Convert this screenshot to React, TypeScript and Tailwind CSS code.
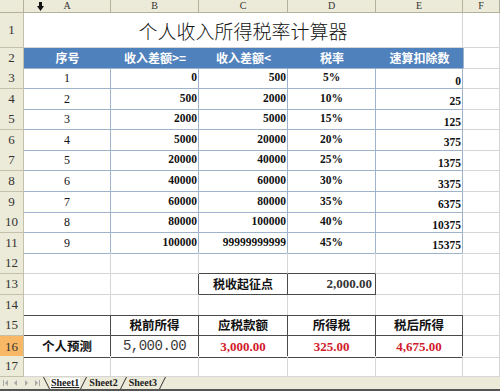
import React from "react";

const cols = "grid grid-cols-[24px_87px_88px_89px_88px_87px_37px]";
const grid = "border-r border-b border-[#d6d6d6]";
const tbl = "border-r border-b border-[#9fb4cc]";
const dark = "border-r border-b border-[#4a4a4a]";
const cjk = "font-['Noto_Sans_CJK_SC',sans-serif]";
const serif = "font-['Liberation_Serif','Noto_Sans_CJK_SC',serif]";

const rates = [
  [1, 0, 500, "5%", 0],
  [2, 500, 2000, "10%", 25],
  [3, 2000, 5000, "15%", 125],
  [4, 5000, 20000, "20%", 375],
  [5, 20000, 40000, "25%", 1375],
  [6, 40000, 60000, "30%", 3375],
  [7, 60000, 80000, "35%", 6375],
  [8, 80000, 100000, "40%", 10375],
  [9, 100000, 99999999999, "45%", 15375],
];

// heights of rows 3..17
const tall = [true, false, true, false, true, true, false, true, false, true, true, false, true, false, true];

function RowHead({ n, active }: { n: number; active?: boolean }) {
  return (
    <div
      className={`flex items-center justify-center border-r border-b border-[#c3c0ab] text-[13px] text-[#333] ${serif} ${
        active ? "bg-[#f9b865]" : "bg-[#ecead9]"
      }`}
    >
      {n}
    </div>
  );
}

function Row({ n, children, active }: { n: number; children?: React.ReactNode; active?: boolean }) {
  const h = tall[n - 3] ? "h-[21px]" : "h-[20px]";
  return (
    <div className={`${cols} ${h}`}>
      <RowHead n={n} active={active} />
      {children}
    </div>
  );
}

function DownArrow() {
  return (
    <svg width="7" height="9" viewBox="0 0 7 9" className="absolute left-[37px] top-[2px]">
      <rect x="2" y="0" width="3" height="5" fill="#111" />
      <polygon points="0,4 7,4 3.5,9" fill="#111" />
    </svg>
  );
}

function Slant({ dir }: { dir: "l" | "r" }) {
  return (
    <svg width="7" height="12" viewBox="0 0 7 12" className="shrink-0">
      {dir === "l" ? (
        <line x1="0.5" y1="0" x2="6.5" y2="12" stroke="#333" strokeWidth="1" />
      ) : (
        <line x1="6.5" y1="0" x2="0.5" y2="12" stroke="#333" strokeWidth="1" />
      )}
    </svg>
  );
}

function TabNav() {
  return (
    <svg width="43" height="8" viewBox="0 0 43 8" className="shrink-0">
      <g fill="#a8a8a8">
        <rect x="3" y="1" width="1" height="6" />
        <polygon points="8,1 8,7 5,4" />
        <polygon points="17,1 17,7 14,4" />
        <polygon points="25,1 25,7 28,4" />
        <polygon points="35,1 35,7 38,4" />
        <rect x="39" y="1" width="1" height="6" />
      </g>
    </svg>
  );
}

export default function App() {
  const letters = ["A", "B", "C", "D", "E", "F"];
  return (
    <div className="w-[500px] h-[391px] overflow-hidden bg-white select-none">
      {/* column headers */}
      <div className={`${cols} h-[13px] relative`}>
        <div className="bg-[#ecead9] border-r border-b border-[#b3b09c]" />
        {letters.map((l) => (
          <div
            key={l}
            className={`flex items-center justify-center bg-[#ecead9] border-r border-b border-[#b3b09c] text-[10px] leading-none text-[#333] ${serif}`}
          >
            {l}
          </div>
        ))}
        <DownArrow />
      </div>

      {/* row 1 title */}
      <div className={`${cols} h-[35px]`}>
        <RowHead n={1} />
        <div className={`col-span-5 flex items-center justify-center pt-[3px] ${grid} ${cjk} text-[19px] font-light text-[#111]`}>
          个人收入所得税率计算器
        </div>
        <div className={grid} />
      </div>

      {/* row 2 header */}
      <div className={`${cols} h-[20px]`}>
        <RowHead n={2} />
        {["序号", "收入差额>=", "收入差额<", "税率", "速算扣除数"].map((t) => (
          <div
            key={t}
            className={`flex items-center justify-center bg-[#4f81bd] border-b border-[#9fb4cc] text-[12px] font-bold text-white ${cjk}`}
          >
            {t}
          </div>
        ))}
        <div className={`${grid} border-l border-l-[#9fb4cc]`} />
      </div>

      {/* rates table */}
      {rates.map(([i, lo, hi, pct, ded], idx) => (
        <Row key={i as number} n={idx + 3}>
          <div className={`flex items-center justify-center ${tbl} text-[12px] text-[#111] ${serif}`}>{i}</div>
          <div className={`flex items-center justify-end pr-[1px] ${tbl} text-[11.5px] font-bold text-[#111] ${serif}`}>{lo}</div>
          <div className={`flex items-center justify-end pr-[1px] ${tbl} text-[11.5px] font-bold text-[#111] ${serif}`}>{hi}</div>
          <div className={`flex items-center justify-center ${tbl} text-[11.5px] font-bold text-[#111] ${serif}`}>{pct}</div>
          <div className={`flex items-end justify-end pr-[1px] pb-[1px] ${tbl} text-[11.5px] font-bold leading-none text-[#111] ${serif}`}>
            {ded}
          </div>
          <div className={grid} />
        </Row>
      ))}

      {/* row 12 */}
      <Row n={12}>
        <div className={grid} />
        <div className={grid} />
        <div className={`${grid} border-b-[#4a4a4a]`} />
        <div className={`${grid} border-b-[#4a4a4a]`} />
        <div className={grid} />
        <div className={grid} />
      </Row>

      {/* row 13 */}
      <Row n={13}>
        <div className={grid} />
        <div className={`${grid} border-r-[#4a4a4a]`} />
        <div className={`flex items-center justify-center ${dark} text-[12px] font-bold text-[#111] ${cjk}`}>税收起征点</div>
        <div className={`flex items-center justify-end pr-[3px] ${dark} text-[13px] font-bold text-[#333] ${serif}`}>2,000.00</div>
        <div className={grid} />
        <div className={grid} />
      </Row>

      {/* row 14 */}
      <Row n={14}>
        <div className={`${grid} border-b-[#4a4a4a]`} />
        <div className={`${grid} border-b-[#4a4a4a]`} />
        <div className={`${grid} border-b-[#4a4a4a]`} />
        <div className={`${grid} border-b-[#4a4a4a]`} />
        <div className={`${grid} border-b-[#4a4a4a]`} />
        <div className={grid} />
      </Row>

      {/* row 15 */}
      <Row n={15}>
        <div className={dark} />
        {["税前所得", "应税款额", "所得税", "税后所得"].map((t) => (
          <div key={t} className={`flex items-center justify-center ${dark} text-[12.5px] font-bold text-[#111] ${cjk}`}>
            {t}
          </div>
        ))}
        <div className={grid} />
      </Row>

      {/* row 16 */}
      <Row n={16} active>
        <div className={`flex items-center justify-center ${dark} text-[12.5px] font-bold text-[#111] ${cjk}`}>个人预测</div>
        <div className={`flex items-center justify-center ${dark} font-['Liberation_Mono',monospace] text-[14px] tracking-[-0.5px] text-[#3a3a3a]`}>
          5,000.00
        </div>
        <div className={`flex items-center justify-center ${dark} text-[13px] font-bold text-[#d11a2a] ${serif}`}>3,000.00</div>
        <div className={`flex items-center justify-center ${dark} text-[13px] font-bold text-[#d11a2a] ${serif}`}>325.00</div>
        <div className={`flex items-center justify-center ${dark} text-[13px] font-bold text-[#d11a2a] ${serif}`}>4,675.00</div>
        <div className={grid} />
      </Row>

      {/* row 17 */}
      <Row n={17}>
        <div className={grid} />
        <div className={grid} />
        <div className={grid} />
        <div className={grid} />
        <div className={grid} />
        <div className={grid} />
      </Row>

      {/* sheet tabs */}
      <div className="flex h-[14px] items-center bg-[#ecead9] border-b-2 border-[#555]">
        <TabNav />
        <div className={`flex h-[12px] items-center text-[10px] font-bold leading-none text-[#222] ${serif}`}>
          <Slant dir="l" />
          <span className="bg-white px-[1px] underline">Sheet1</span>
          <Slant dir="r" />
          <span className="px-[2px]">Sheet2</span>
          <Slant dir="r" />
          <span className="px-[2px]">Sheet3</span>
          <Slant dir="r" />
        </div>
      </div>
    </div>
  );
}
